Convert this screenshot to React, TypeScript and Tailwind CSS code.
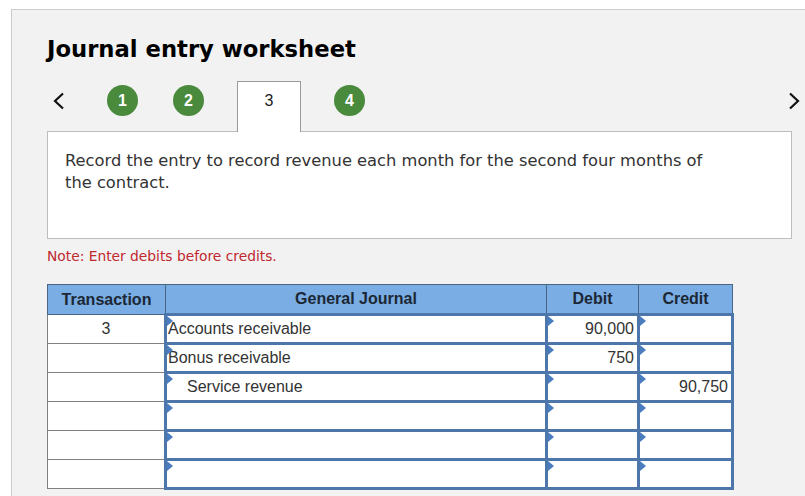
import React from "react";

type Row = { t: string; acct: string; indent: boolean; debit: string; credit: string };

const rows: Row[] = [
  { t: "3", acct: "Accounts receivable", indent: false, debit: "90,000", credit: "" },
  { t: "", acct: "Bonus receivable", indent: false, debit: "750", credit: "" },
  { t: "", acct: "Service revenue", indent: true, debit: "", credit: "90,750" },
  { t: "", acct: "", indent: false, debit: "", credit: "" },
  { t: "", acct: "", indent: false, debit: "", credit: "" },
  { t: "", acct: "", indent: false, debit: "", credit: "" },
];

function Marker() {
  return (
    <span className="absolute left-0 top-0 w-0 h-0 border-l-[6px] border-l-[#4a7cc0] border-y-[5px] border-y-transparent" />
  );
}

function Circle({ n, className }: { n: string; className?: string }) {
  return (
    <div
      className={
        "w-[31px] h-[31px] mt-[4px] rounded-full bg-[#4a8a3c] text-white flex items-center justify-center font-['Liberation_Sans'] font-bold text-[16px] " +
        (className ?? "")
      }
    >
      {n}
    </div>
  );
}

export default function App() {
  return (
    <div className="w-[805px] h-[496px] overflow-hidden bg-white pt-[9px] pl-[11px]">
      <div className="w-[820px] h-[520px] bg-[#f2f2f2] border-t border-l border-[#cccccc] pl-[35px] pt-[26px]">
        <h1 className="font-['DejaVu_Sans'] font-bold text-[22.7px] leading-[26px] text-black">
          Journal entry worksheet
        </h1>

        <div className="flex items-start w-[758px] h-[50px] mt-[19px]">
          <svg className="ml-[5px] mt-[11px]" width="14" height="18" viewBox="0 0 14 18">
            <polyline points="11,1.5 3,9 11,16.5" fill="none" stroke="#111" strokeWidth="2.2" />
          </svg>
          <Circle n="1" className="ml-[41px]" />
          <Circle n="2" className="ml-[35px]" />
          <div className="relative z-10 ml-[33px] w-[64px] h-[51px] bg-white border-t border-l border-r border-[#9a9a9a] flex justify-center pt-[10px] font-['Liberation_Sans'] text-[16px] leading-[18px] text-[#222]">
            3
          </div>
          <Circle n="4" className="ml-[33px]" />
          <svg className="ml-auto mr-[4px] mt-[11px]" width="14" height="18" viewBox="0 0 14 18">
            <polyline points="3,1.5 11,9 3,16.5" fill="none" stroke="#111" strokeWidth="2.2" />
          </svg>
        </div>

        <div className="w-[745px] h-[108px] bg-white border border-[#bdbdbd] pl-[17px] pt-[18px] font-['DejaVu_Sans'] text-[16.3px] leading-[22px] text-[#333]">
          Record the entry to record revenue each month for the second four months of
          <br />
          the contract.
        </div>

        <div className="mt-[7px] font-['DejaVu_Sans'] text-[13.8px] leading-[20px] text-[#c0282e]">
          Note: Enter debits before credits.
        </div>

        <table className="mt-[18px] border-collapse table-fixed w-[685px] font-['Liberation_Sans'] text-[16px] text-[#333]">
          <colgroup>
            <col className="w-[118px]" />
            <col className="w-[381px]" />
            <col className="w-[92px]" />
            <col className="w-[94px]" />
          </colgroup>
          <thead>
            <tr className="h-[30px] bg-[#79ade3] text-[#1c2735] font-bold">
              <th className="border border-[#4b6584] font-bold">Transaction</th>
              <th className="border border-[#4b6584] border-b-2 border-b-[#2d4868] font-bold">General Journal</th>
              <th className="border border-[#4b6584] border-b-2 border-b-[#2d4868] font-bold">Debit</th>
              <th className="border border-[#4b6584] border-b-2 border-b-[#2d4868] font-bold">Credit</th>
            </tr>
          </thead>
          <tbody>
            {rows.map((r, i) => (
              <tr key={i} className="h-[29px]">
                <td className="bg-white border border-[#808080] text-center leading-[18px]">{r.t}</td>
                <td className="relative bg-white border-[3px] border-[#4d76ab] p-0 leading-[18px]">
                  <Marker />
                  <span className={r.indent ? "pl-[20px]" : "pl-[1px]"}>{r.acct}</span>
                </td>
                <td className="relative bg-white border-[3px] border-[#4d76ab] pr-[3px] text-right leading-[18px]">
                  <Marker />
                  {r.debit}
                </td>
                <td className="relative bg-white border-[3px] border-[#4d76ab] pr-[3px] text-right leading-[18px]">
                  <Marker />
                  {r.credit}
                </td>
              </tr>
            ))}
          </tbody>
        </table>
      </div>
    </div>
  );
}
